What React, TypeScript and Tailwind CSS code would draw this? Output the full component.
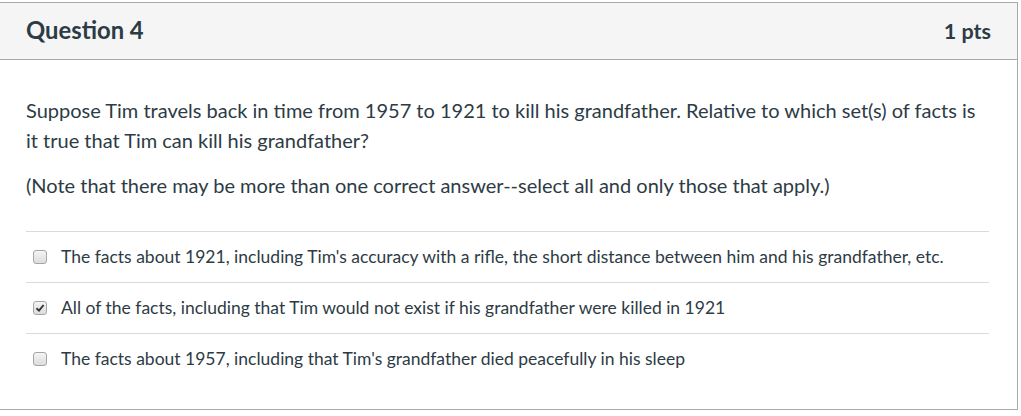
import React from "react";

const answers = [
  { text: "The facts about 1921, including Tim's accuracy with a rifle, the short distance between him and his grandfather, etc.", checked: false },
  { text: "All of the facts, including that Tim would not exist if his grandfather were killed in 1921", checked: true },
  { text: "The facts about 1957, including that Tim's grandfather died peacefully in his sleep", checked: false },
];

function Box({ checked }: { checked: boolean }) {
  return (
    <span className="relative flex h-[14px] w-[14px] shrink-0 items-center justify-center rounded-[3px] border border-[#a6a6a6] bg-gradient-to-b from-[#f4f4f4] to-[#dcdcdc]">
      {checked && (
        <svg width="10" height="10" viewBox="0 0 10 10">
          <path d="M1.5 5.2 L4 7.6 L8.6 2" fill="none" stroke="#333" strokeWidth="1.9" />
        </svg>
      )}
    </span>
  );
}

export default function App() {
  return (
    <div className="h-[416px] w-[1021px] overflow-hidden bg-white font-['Lato',sans-serif] text-[#2d3b45]">
      <div className="ml-[-1px] mt-[2px] h-[408px] w-[1019px] border border-[#a9a9a9] bg-white">
        <div className="flex h-[57px] items-center justify-between border-b border-[#a9a9a9] bg-[#f5f5f5] pl-[26px] pr-[26px]">
          <span className="text-[23.8px] font-bold">Question 4</span>
          <span className="text-[21.5px] font-bold">1 pts</span>
        </div>
        <div className="pl-[26px] pr-[27px] pt-[35px]">
          <p className="max-w-[960px] text-[20px] leading-[30px]">
            Suppose Tim travels back in time from 1957 to 1921 to kill his grandfather. Relative to which set(s) of facts is it true that Tim can kill his grandfather?
          </p>
          <p className="mt-[15px] text-[20px] leading-[30px]">
            (Note that there may be more than one correct answer--select all and only those that apply.)
          </p>
          <div className="mt-[31px] mr-[1px]">
            {answers.map((a, i) => (
              <div key={i} className="flex h-[51px] items-center gap-[14px] border-t border-[#dadada] pl-[7px]">
                <Box checked={a.checked} />
                <span className="text-[17.5px]">{a.text}</span>
              </div>
            ))}
          </div>
        </div>
      </div>
    </div>
  );
}
